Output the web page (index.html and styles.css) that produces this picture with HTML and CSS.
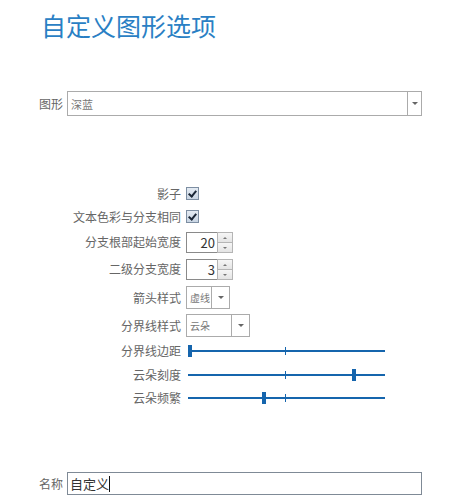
FILE: index.html
```html
<!DOCTYPE html>
<html lang="zh-CN">

<head>
    <meta charset="UTF-8" />
    <title>自定义图形选项</title>
    <link rel="stylesheet" href="styles.css">
</head>

<body>
    <h1 class="title">自定义图形选项</h1>

    <!-- 图形 -->
    <div class="field-row shape-row">
        <span class="field-label">图形</span>
        <div class="select wide">
            <span class="select-text">深蓝</span>
            <span class="select-btn"><span class="caret"></span></span>
        </div>
    </div>

    <!-- 选项 -->
    <div class="options">
        <span class="opt-label r1">影子</span>
        <span class="r1"><span class="check"></span></span>

        <span class="opt-label r2">文本色彩与分支相同</span>
        <span class="r2"><span class="check"></span></span>

        <span class="opt-label r3">分支根部起始宽度</span>
        <span class="r3">
            <span class="spinner">
                <span class="spin-value">20</span>
                <span class="spin-btns"><span class="spin-up"></span><span class="spin-down"></span></span>
            </span>
        </span>

        <span class="opt-label r4">二级分支宽度</span>
        <span class="r4">
            <span class="spinner">
                <span class="spin-value">3</span>
                <span class="spin-btns"><span class="spin-up"></span><span class="spin-down"></span></span>
            </span>
        </span>

        <span class="opt-label r5">箭头样式</span>
        <span class="r5">
            <span class="select small arrow-select">
                <span class="select-text">虚线</span>
                <span class="select-btn"><span class="caret"></span></span>
            </span>
        </span>

        <span class="opt-label r6">分界线样式</span>
        <span class="r6">
            <span class="select small line-select">
                <span class="select-text">云朵</span>
                <span class="select-btn"><span class="caret"></span></span>
            </span>
        </span>

        <span class="opt-label r7">分界线边距</span>
        <span class="r7">
            <span class="slider"><span class="tick"></span><span class="thumb" style="left: 0px"></span></span>
        </span>

        <span class="opt-label r8">云朵刻度</span>
        <span class="r8">
            <span class="slider"><span class="tick"></span><span class="thumb" style="left: 164px"></span></span>
        </span>

        <span class="opt-label r9">云朵频繁</span>
        <span class="r9">
            <span class="slider"><span class="tick"></span><span class="thumb" style="left: 74px"></span></span>
        </span>
    </div>

    <!-- 名称 -->
    <div class="field-row name-row">
        <span class="field-label">名称</span>
        <div class="name-input"><span class="name-text">自定义</span><span class="cursor"></span></div>
    </div>
</body>

</html>
```

FILE: styles.css
```css
body {
    font-family: "Noto Sans CJK SC", "Noto Sans", sans-serif;
    background-color: white;
    color: #555;
    margin: 0;
    padding: 0;
    width: 449px;
    height: 499px;
    overflow: hidden;
}

.title {
    margin: 0;
    padding: 8px 0 0 41px;
    height: 38px;
    font-size: 25px;
    font-weight: normal;
    line-height: 34px;
    color: #2a7fc4;
}

.field-row {
    display: flex;
    align-items: center;
    padding-left: 39px;
}

.shape-row {
    margin-top: 45px;
}

.field-label {
    font-size: 12px;
    color: #666;
    width: 28px;
}

.select {
    display: flex;
    align-items: stretch;
    border: 1px solid #ababab;
    background-color: white;
    box-sizing: border-box;
}

.wide {
    width: 355px;
    height: 25px;
}

.select-text {
    flex: 1;
    font-size: 11px;
    color: #777;
    padding-left: 3px;
    display: flex;
    align-items: center;
}

.select-btn {
    width: 13px;
    border-left: 1px solid #ababab;
    display: flex;
    align-items: center;
    justify-content: center;
}

.caret {
    width: 0;
    height: 0;
    border-left: 3px solid transparent;
    border-right: 3px solid transparent;
    border-top: 3px solid #666;
}

.options {
    display: grid;
    grid-template-columns: 181px auto;
    grid-template-rows: 23px 23px 27px 27px 30px 26px 25px 23px 23px;
    column-gap: 5px;
    margin-top: 66px;
    align-items: center;
}

.options > span {
    display: flex;
    align-items: center;
}

.options > .opt-label {
    justify-content: flex-end;
    font-size: 12px;
    color: #666;
}

.check {
    position: relative;
    width: 11px;
    height: 11px;
    border: 1px solid #7d8ea2;
    background: linear-gradient(#e4ebf3, #c9d5e3);
}

.check::after {
    content: "";
    position: absolute;
    left: 3px;
    top: 1px;
    width: 3px;
    height: 6px;
    border-right: 2px solid #1a2636;
    border-bottom: 2px solid #1a2636;
    transform: rotate(40deg);
}

.spinner {
    display: flex;
    height: 21px;
    margin-top: 1px;
}

.spin-value {
    width: 28px;
    border: 1px solid #8a8a8a;
    border-right: none;
    font-size: 13px;
    color: #333;
    text-align: right;
    padding-right: 2px;
    line-height: 19px;
}

.spin-btns {
    display: flex;
    flex-direction: column;
    width: 14px;
    border: 1px solid #b5b5b5;
}

.spin-up,
.spin-down {
    flex: 1;
    position: relative;
    background: linear-gradient(#f6f6f6, #e4e4e4);
}

.spin-up {
    border-bottom: 1px solid #b5b5b5;
}

.spin-up::after,
.spin-down::after {
    content: "";
    position: absolute;
    left: 5px;
    top: 4px;
    border-left: 2px solid transparent;
    border-right: 2px solid transparent;
}

.spin-up::after {
    border-bottom: 2px solid #777;
}

.spin-down::after {
    border-top: 2px solid #777;
}

.small {
    height: 23px;
}

.arrow-select {
    width: 44px;
}

.line-select {
    width: 64px;
}

.small .select-text {
    font-size: 10px;
}

.small .select-btn {
    width: 17px;
}

.slider {
    position: relative;
    width: 197px;
    height: 11px;
    margin-left: 2px;
}

.slider::before {
    content: "";
    position: absolute;
    left: 0;
    right: 0;
    top: 5px;
    height: 2px;
    background-color: #1565ad;
}

.tick {
    position: absolute;
    left: 97px;
    top: 2px;
    width: 1px;
    height: 8px;
    background-color: #1565ad;
}

.thumb {
    position: absolute;
    top: 0;
    width: 4px;
    height: 12px;
    background-color: #1565ad;
}

.name-row {
    margin-top: 63px;
}

.name-input {
    display: flex;
    align-items: center;
    width: 355px;
    height: 23px;
    box-sizing: border-box;
    border: 1px solid #7f8a96;
    padding-left: 2px;
}

.name-text {
    font-size: 13px;
    color: #333;
}

.cursor {
    width: 1px;
    height: 16px;
    background-color: #111;
}
```
